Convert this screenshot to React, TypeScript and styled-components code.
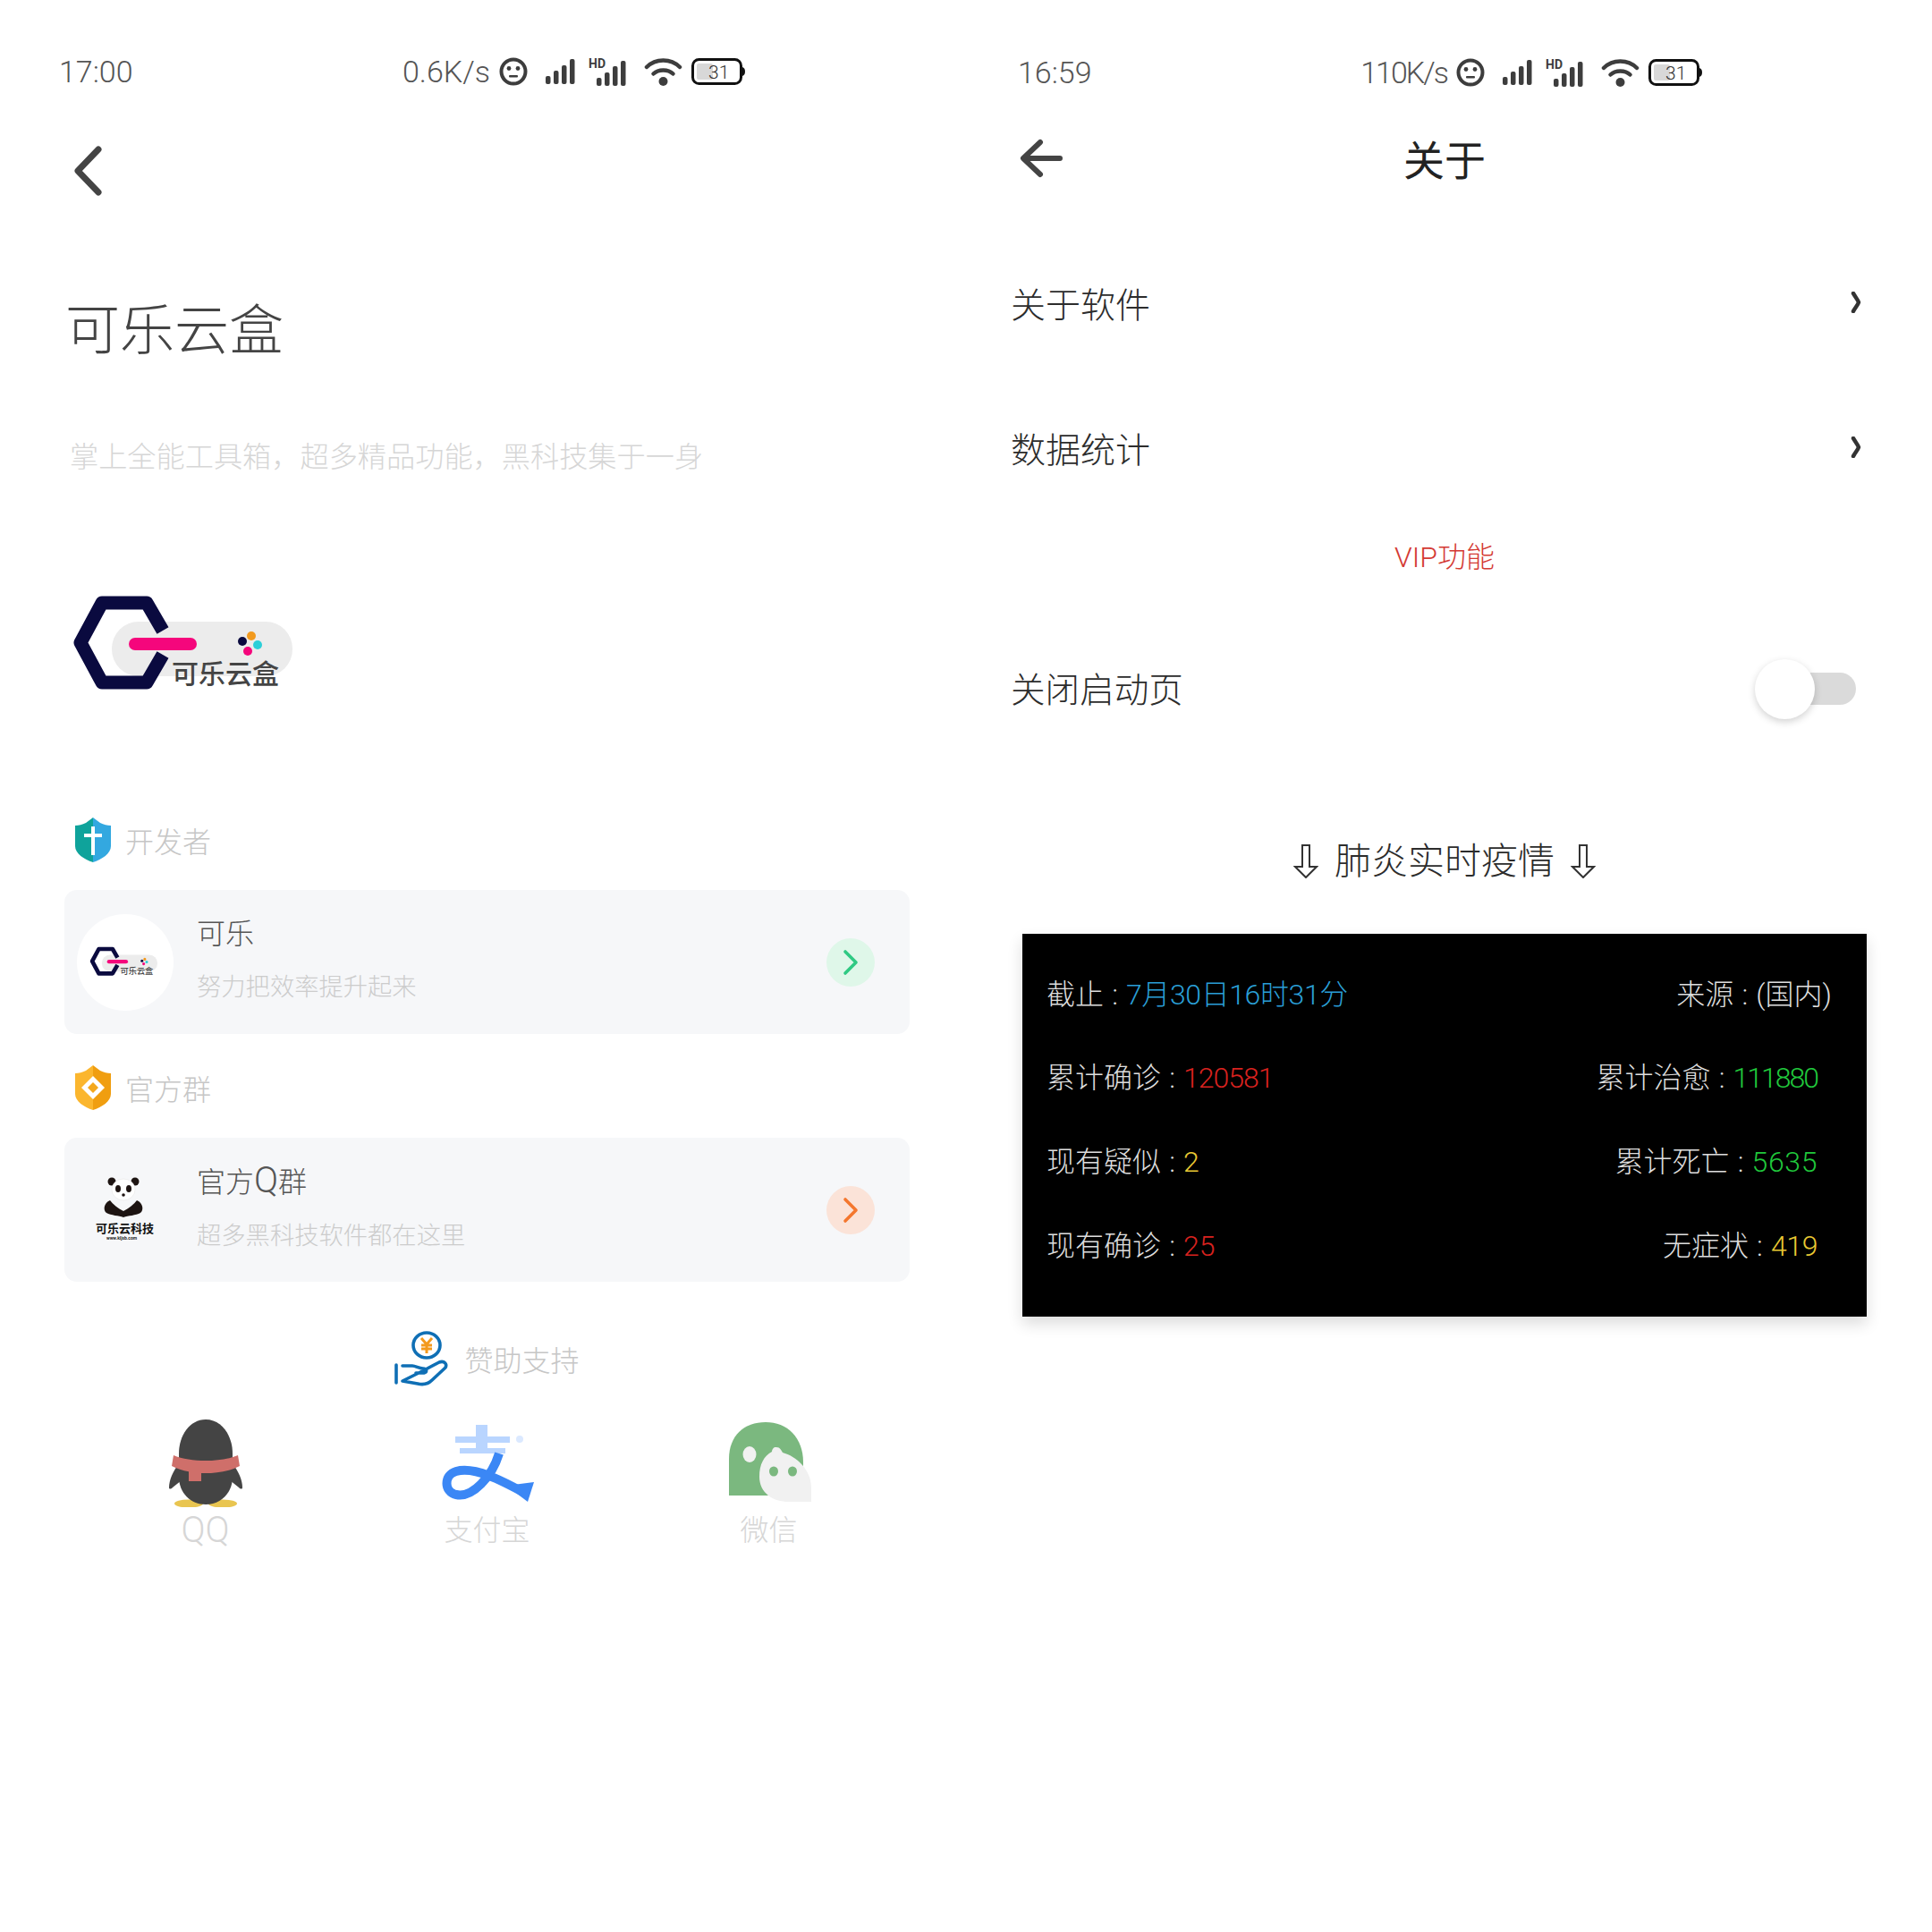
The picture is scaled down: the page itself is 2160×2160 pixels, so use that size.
import styled, { createGlobalStyle } from 'styled-components';

const GlobalStyle = createGlobalStyle`
  html, body {
    margin: 0;
    padding: 0;
    background: #fff;
  }
  body {
    font-family: Roboto, "Noto Sans CJK SC", sans-serif;
    font-weight: 300;
  }
`;

const Page = styled.div`
  display: grid;
  grid-template-columns: 1080px 1080px;
  width: 2160px;
  height: 2160px;
  background: #fff;
  overflow: hidden;
`;

const Panel = styled.section`
  display: flex;
  flex-direction: column;
  min-width: 0;
`;

/* status bar */

const StatusBar = styled.div<{ $top: number; $left: number; $right: number }>`
  display: flex;
  align-items: center;
  justify-content: space-between;
  height: 40px;
  padding: ${({ $top }) => $top}px ${({ $right }) => $right}px 0 ${({ $left }) => $left}px;
`;

const StatusText = styled.span<{ $tracking?: number }>`
  font-size: 34px;
  line-height: 40px;
  letter-spacing: ${({ $tracking }) => $tracking ?? 0}px;
  color: #555;
`;

const StatusRight = styled.div`
  display: flex;
  align-items: center;
`;

const StatusIcon = styled.svg<{ $gap: number }>`
  display: block;
  margin-left: ${({ $gap }) => $gap}px;
`;

const StatusIcons = () => (
  <>
    <StatusIcon $gap={10} width="32" height="32" viewBox="0 0 32 32">
      <circle cx="16" cy="16" r="13.5" fill="none" stroke="#3d3d3d" strokeWidth="4" />
      <circle cx="11" cy="12.5" r="2.4" fill="#3d3d3d" />
      <circle cx="21" cy="12.5" r="2.4" fill="#3d3d3d" />
      <rect x="11" y="20" width="10" height="2.6" rx="1" fill="#3d3d3d" />
    </StatusIcon>
    <StatusIcon $gap={20} width="33" height="28" viewBox="0 0 33 28">
      <rect x="0" y="19" width="5.5" height="9" rx="2" fill="#3d3d3d" />
      <rect x="9" y="13" width="5.5" height="15" rx="2" fill="#3d3d3d" />
      <rect x="18" y="7" width="5.5" height="21" rx="2" fill="#3d3d3d" />
      <rect x="27" y="0" width="5.5" height="28" rx="2" fill="#3d3d3d" />
    </StatusIcon>
    <StatusIcon $gap={15} width="42" height="36" viewBox="0 0 42 36">
      <text x="0" y="14" fontFamily="Roboto, sans-serif" fontWeight="700" fontSize="14" fill="#3d3d3d">
        HD
      </text>
      <rect x="9" y="25" width="5.5" height="9" rx="2" fill="#3d3d3d" />
      <rect x="18" y="19" width="5.5" height="15" rx="2" fill="#3d3d3d" />
      <rect x="27" y="12" width="5.5" height="22" rx="2" fill="#3d3d3d" />
      <rect x="36" y="6" width="5.5" height="28" rx="2" fill="#3d3d3d" />
    </StatusIcon>
    <StatusIcon $gap={20} width="43" height="32" viewBox="0 0 43 32">
      <path d="M3 11 C13 1 30 1 40 11" fill="none" stroke="#3d3d3d" strokeWidth="4.5" strokeLinecap="round" />
      <path d="M10.5 18.5 C16 13 27 13 32.5 18.5" fill="none" stroke="#3d3d3d" strokeWidth="4.5" strokeLinecap="round" />
      <circle cx="21.5" cy="27" r="5" fill="#3d3d3d" />
    </StatusIcon>
    <StatusIcon $gap={10} width="61" height="30" viewBox="0 0 61 30">
      <rect x="1.5" y="1.5" width="54" height="27" rx="7" fill="#fff" stroke="#111" strokeWidth="3" />
      <rect x="6" y="6" width="18" height="18" rx="2" fill="#d8d8d8" />
      <path d="M57 10 C61 11 61 19 57 20 Z" fill="#111" />
      <text x="19" y="23" fontFamily="Roboto, sans-serif" fontWeight="300" fontSize="21" fill="#333">
        31
      </text>
    </StatusIcon>
  </>
);

/* left panel */

const BackChevron = styled.svg`
  display: block;
  margin: 63px 0 0 80px;
`;

const AppTitle = styled.h1`
  margin: 111px 0 0 73px;
  font-size: 61px;
  line-height: 80px;
  font-weight: 300;
  color: #444;
`;

const AppSlogan = styled.p`
  margin: 81px 0 0 78px;
  font-size: 32.2px;
  line-height: 40px;
  color: #d6d6d6;
`;

const LogoWrap = styled.div`
  margin: 130px 0 0 80px;
  height: 120px;
`;

const SectionLabel = styled.div<{ $top: number }>`
  display: flex;
  align-items: center;
  gap: 16px;
  height: 50px;
  margin: ${({ $top }) => $top}px 0 0 84px;
  font-size: 32px;
  color: #c6c6c6;
`;

const Card = styled.div`
  display: flex;
  align-items: center;
  width: 945px;
  height: 161px;
  margin: 31px 0 0 72px;
  padding: 0 39px 0 14px;
  box-sizing: border-box;
  background: #f6f7f9;
  border-radius: 14px;
`;

const Avatar = styled.div<{ $bg: string }>`
  display: flex;
  align-items: center;
  justify-content: center;
  flex: none;
  width: 108px;
  height: 108px;
  border-radius: 50%;
  background: ${({ $bg }) => $bg};
`;

const CardText = styled.div`
  display: flex;
  flex-direction: column;
  gap: 18px;
  flex: 1;
  margin: 0 0 5px 26px;
`;

const CardTitle = styled.div`
  font-size: 32px;
  line-height: 44px;
  color: #555;
`;

const WideLetter = styled.span`
  font-size: 40px;
`;

const CardDesc = styled.div`
  font-size: 27.3px;
  line-height: 40px;
  color: #ccc;
`;

const CardArrow = styled.div<{ $bg: string }>`
  display: flex;
  align-items: center;
  justify-content: center;
  flex: none;
  width: 54px;
  height: 54px;
  border-radius: 50%;
  background: ${({ $bg }) => $bg};
`;

const SponsorRow = styled.div`
  display: flex;
  align-items: center;
  justify-content: center;
  gap: 18px;
  width: 945px;
  height: 62px;
  margin: 55px 0 0 72px;
  font-size: 32px;
  color: #c6c6c6;
`;

const PayGrid = styled.div`
  display: grid;
  grid-template-columns: repeat(3, 315px);
  margin: 35px 0 0 72px;
`;

const PayItem = styled.div`
  display: flex;
  flex-direction: column;
  align-items: center;
`;

const PayIcon = styled.svg`
  display: block;
`;

const PayLabel = styled.div<{ $size?: number }>`
  margin-top: 6px;
  font-size: ${({ $size }) => $size ?? 32}px;
  line-height: 40px;
  color: #d6d6d6;
`;

const LogoMark = ({ width }: { width: number }) => (
  <svg width={width} height={(width * 120) / 260} viewBox="0 0 260 120" style={{ display: 'block' }}>
    <rect x="45" y="34" width="202" height="61" rx="30" fill="#ececec" />
    <path
      d="M102 44 L84 13 H34 L10 57.5 L34 102 H84 L102 71"
      fill="none"
      stroke="#0a0a3f"
      strokeWidth="15"
      strokeLinejoin="round"
    />
    <rect x="64" y="52" width="76" height="14" rx="7" fill="#f5067c" />
    <circle cx="191" cy="56" r="5" fill="#0a0a3f" />
    <circle cx="201" cy="50" r="5" fill="#f29a1f" />
    <circle cx="208" cy="60" r="5" fill="#2ccfd8" />
    <circle cx="197" cy="67" r="5" fill="#f5067c" />
    <text x="112" y="103" fontFamily="'Noto Sans CJK SC', sans-serif" fontWeight="500" fontSize="30" fill="#444">
      可乐云盒
    </text>
  </svg>
);

const Panda = () => (
  <svg width="108" height="108" viewBox="0 0 108 108">
    <circle cx="39" cy="22" r="4.5" fill="#1d1412" />
    <circle cx="65" cy="22" r="4.5" fill="#1d1412" />
    <ellipse cx="52" cy="31" rx="13" ry="12" fill="#fff" stroke="#e6e6e6" strokeWidth="0.6" />
    <ellipse cx="46" cy="30" rx="3" ry="4" fill="#1d1412" />
    <ellipse cx="58" cy="30" rx="3" ry="4" fill="#1d1412" />
    <circle cx="52" cy="37" r="1.8" fill="#1d1412" />
    <path
      d="M37 43 C30 46 29 54 33 57 C38 60 47 60 52 62 C57 60 66 60 71 57 C75 54 74 46 67 43 C64 47 58 52 52 55 C46 52 40 47 37 43 Z"
      fill="#1d1412"
    />
    <text x="21" y="79" fontFamily="'Noto Sans CJK SC', serif" fontWeight="700" fontSize="13" fill="#111">
      可乐云科技
    </text>
    <text x="33" y="87" fontFamily="Roboto, sans-serif" fontWeight="700" fontSize="5" fill="#222">
      www.kljsb.com
    </text>
  </svg>
);

/* right panel */

const TitleBar = styled.header`
  display: grid;
  grid-template-columns: 48px 1fr 48px;
  align-items: center;
  height: 70px;
  margin-top: 41px;
  padding: 0 70px 0 60px;
`;

const TitleText = styled.h2`
  margin: 5px 0 0;
  text-align: center;
  font-size: 46px;
  line-height: 64px;
  font-weight: 400;
  color: #222;
`;

const MenuList = styled.div`
  margin-top: 45px;
`;

const MenuRow = styled.div`
  display: flex;
  align-items: center;
  justify-content: space-between;
  height: 162px;
  padding: 0 79px 0 50px;
  font-size: 39px;
  color: #2c2c2c;
`;

const VipLabel = styled.div`
  margin: 22px 0 0 -10px;
  text-align: center;
  font-size: 32px;
  line-height: 40px;
  color: #d43a34;
`;

const SwitchRow = styled.div`
  display: flex;
  align-items: center;
  justify-content: space-between;
  height: 70px;
  margin-top: 92px;
  padding: 0 85px 0 50px;
  font-size: 38.6px;
  color: #2c2c2c;
`;

const SwitchLabel = styled.span`
  margin-bottom: 4px;
`;

const SwitchTrack = styled.div`
  display: flex;
  align-items: center;
  width: 100px;
  height: 36px;
  border-radius: 0 18px 18px 0;
  background: #dadada;
`;

const SwitchKnob = styled.div`
  flex: none;
  width: 67px;
  height: 67px;
  margin-left: -13px;
  border-radius: 50%;
  background: #fff;
  box-shadow: 0 3px 8px rgba(0, 0, 0, 0.18);
`;

const EpidemicHeading = styled.div`
  display: flex;
  align-items: center;
  justify-content: center;
  gap: 18px;
  margin: 128px 0 0 -10px;
  font-size: 41px;
  line-height: 60px;
  color: #2c2c2c;
`;

const StatsPanel = styled.div`
  display: flex;
  flex-direction: column;
  width: 944px;
  height: 428px;
  margin: 51px 0 0 63px;
  padding: 18px 39px 0 27px;
  box-sizing: border-box;
  background: #000;
  box-shadow: 0 8px 16px rgba(0, 0, 0, 0.14);
`;

const StatsRow = styled.div`
  display: flex;
  align-items: center;
  justify-content: space-between;
  height: 93.6px;
`;

const Stat = styled.div<{ $inset?: number }>`
  margin-right: ${({ $inset }) => $inset ?? 0}px;
  font-size: 32px;
  color: #ddd;
`;

const StatColon = styled.span`
  display: inline-block;
  width: 25px;
  text-align: center;
`;

const StatValue = styled.span<{ $color: string; $tracking: number }>`
  color: ${({ $color }) => $color};
  letter-spacing: ${({ $tracking }) => $tracking}px;
`;

type StatCell = {
  label: string;
  value: string;
  color: string;
  tracking?: number;
  inset?: number;
};

const statRows: StatCell[][] = [
  [
    { label: '截止', value: '7月30日16时31分', color: '#2a9fd6', tracking: -0.4 },
    { label: '来源', value: '(国内)', color: '#ddd' },
  ],
  [
    { label: '累计确诊', value: '120581', color: '#d8221f', tracking: -1 },
    { label: '累计治愈', value: '111880', color: '#20c83c', tracking: -2, inset: 16 },
  ],
  [
    { label: '现有疑似', value: '2', color: '#e8c833' },
    { label: '累计死亡', value: '5635', color: '#20c83c', tracking: 0.6, inset: 16 },
  ],
  [
    { label: '现有确诊', value: '25', color: '#d8221f' },
    { label: '无症状', value: '419', color: '#e8c833', tracking: -0.4, inset: 16 },
  ],
];

const RowChevron = () => (
  <svg width="12" height="24" viewBox="0 0 12 24">
    <path d="M3 2 C6 7 8 9 9 12 C8 15 6 17 3 22" fill="none" stroke="#333" strokeWidth="4.4" strokeLinecap="round" strokeLinejoin="round" />
  </svg>
);

const CardChevron = ({ color }: { color: string }) => (
  <svg width="18" height="30" viewBox="0 0 18 30">
    <path d="M3 3 L15 15 L3 27" fill="none" stroke={color} strokeWidth="3.6" strokeLinecap="round" strokeLinejoin="round" />
  </svg>
);

const DownArrow = () => (
  <svg width="28" height="38" viewBox="0 0 28 38">
    <path d="M10 1 H18 V25 H26 L14 37 L2 25 H10 Z" fill="none" stroke="#333" strokeWidth="2" strokeLinejoin="miter" />
  </svg>
);

export default function App() {
  return (
    <Page>
      <GlobalStyle />
      <Panel>
        <StatusBar $top={60} $left={66} $right={246}>
          <StatusText>17:00</StatusText>
          <StatusRight>
            <StatusText>0.6K/s</StatusText>
            <StatusIcons />
          </StatusRight>
        </StatusBar>

        <BackChevron width="36" height="56" viewBox="0 0 36 56">
          <path d="M30 4 L7 28 L30 52" fill="none" stroke="#444" strokeWidth="7" strokeLinecap="round" strokeLinejoin="round" />
        </BackChevron>

        <AppTitle>可乐云盒</AppTitle>
        <AppSlogan>掌上全能工具箱，超多精品功能，黑科技集于一身</AppSlogan>

        <LogoWrap>
          <LogoMark width={260} />
        </LogoWrap>

        <SectionLabel $top={133}>
          <svg width="40" height="50" viewBox="0 0 40 50">
            <path d="M20 0 L28 6 C32 8 36 9 40 9 V32 C40 40 30 47 20 50 Z" fill="#33a8e0" />
            <path d="M20 0 L12 6 C8 8 4 9 0 9 V32 C0 40 10 47 20 50 Z" fill="#0fa39b" />
            <path d="M18 10 H22 V18 H30 V22 H22 V42 H18 V22 H10 V18 H18 Z" fill="#fff" />
          </svg>
          开发者
        </SectionLabel>

        <Card>
          <Avatar $bg="#fff">
            <LogoMark width={80} />
          </Avatar>
          <CardText>
            <CardTitle>可乐</CardTitle>
            <CardDesc>努力把效率提升起来</CardDesc>
          </CardText>
          <CardArrow $bg="#dff7e9">
            <CardChevron color="#2fc983" />
          </CardArrow>
        </Card>

        <SectionLabel $top={35}>
          <svg width="40" height="50" viewBox="0 0 40 50">
            <path d="M20 0 L28 6 C32 8 36 9 40 9 V32 C40 40 30 47 20 50 Z" fill="#f09e10" />
            <path d="M20 0 L12 6 C8 8 4 9 0 9 V32 C0 40 10 47 20 50 Z" fill="#fbb62e" />
            <path d="M20 12 L33 25 L20 38 L7 25 Z" fill="#fff" />
            <path d="M20 19 L26 25 L20 31 L14 25 Z" fill="#f4a81c" />
          </svg>
          官方群
        </SectionLabel>

        <Card>
          <Avatar $bg="transparent">
            <Panda />
          </Avatar>
          <CardText>
            <CardTitle>
              官方<WideLetter>Q</WideLetter>群
            </CardTitle>
            <CardDesc>超多黑科技软件都在这里</CardDesc>
          </CardText>
          <CardArrow $bg="#fbe3d8">
            <CardChevron color="#f4772e" />
          </CardArrow>
        </Card>

        <SponsorRow>
          <svg width="60" height="62" viewBox="0 0 60 62">
            <ellipse cx="36" cy="16" rx="15" ry="14" fill="#fff" stroke="#0f6fb5" strokeWidth="3.6" />
            <path d="M30 8 L36 15 L42 8 M36 15 V25 M30 16 H42 M30 20 H42" fill="none" stroke="#f39a1e" strokeWidth="3" />
            <path d="M2 38 V58" stroke="#0f6fb5" strokeWidth="3.6" strokeLinecap="round" />
            <path
              d="M9 39 H20 C24 39 27 42 32 42 C36 42 37 46 33 47 H24 M33 44 L50 35 C56 33 59 37 57 41 L42 55 C37 60 30 60 26 59 L9 56 Z"
              fill="none"
              stroke="#0f6fb5"
              strokeWidth="3.6"
              strokeLinejoin="round"
              strokeLinecap="round"
            />
          </svg>
          赞助支持
        </SponsorRow>

        <PayGrid>
          <PayItem>
            <PayIcon width="90" height="100" viewBox="0 0 90 100">
              <ellipse cx="26" cy="96" rx="16" ry="4.5" fill="#e9c550" />
              <ellipse cx="64" cy="96" rx="16" ry="4.5" fill="#e9c550" />
              <path d="M16 50 C8 60 4 70 4 78 C4 80 6 80 8 78 L18 70 Z" fill="#444" />
              <path d="M74 50 C82 60 86 70 86 78 C86 80 84 80 82 78 L72 70 Z" fill="#444" />
              <path d="M45 2 C63 2 75 20 75 40 C75 50 75 56 75 66 C75 84 62 97 45 97 C28 97 15 84 15 66 C15 56 15 50 15 40 C15 20 27 2 45 2 Z" fill="#444" />
              <path d="M9 42 C28 50 62 50 81 42 L83 54 C72 60 56 62 45 62 C34 62 18 60 7 54 Z" fill="#cf6f6a" />
              <rect x="26" y="58" width="14" height="13" fill="#cf6f6a" />
            </PayIcon>
            <PayLabel $size={40}>QQ</PayLabel>
          </PayItem>
          <PayItem>
            <PayIcon width="110" height="100" viewBox="0 0 110 100">
              <rect x="42" y="8" width="13" height="30" fill="#b9d5ff" />
              <rect x="19" y="21" width="61" height="7" fill="#b9d5ff" />
              <rect x="24" y="34" width="51" height="6" fill="#b9d5ff" />
              <ellipse cx="91" cy="24" rx="4" ry="4" fill="#dbe9ff" />
              <path
                d="M68 40 C60 66 38 90 20 86 C6 83 6 64 20 60 C42 54 74 72 100 86"
                fill="none"
                stroke="#3b87f5"
                strokeWidth="10"
              />
              <path d="M107 72 L100 94 L76 76 Z" fill="#3b87f5" />
            </PayIcon>
            <PayLabel>支付宝</PayLabel>
          </PayItem>
          <PayItem>
            <PayIcon width="100" height="100" viewBox="0 0 100 100">
              <path d="M5 87 V46 C5 20 22 5 46 5 C70 5 88 22 88 50 V87 Z" fill="#7bb87f" />
              <ellipse cx="28" cy="41" rx="7.5" ry="9" fill="#f1f1f1" />
              <path d="M56 33 C62 33 62 34 65 39 C80 43 97 58 97 78 V94 H72 C54 94 39 84 39 66 C39 52 44 43 53 38 C53 36 54 34 56 33 Z" fill="#f1f1f1" />
              <ellipse cx="55" cy="60" rx="5" ry="5.5" fill="#7bb87f" />
              <ellipse cx="76" cy="60" rx="5" ry="5.5" fill="#7bb87f" />
            </PayIcon>
            <PayLabel>微信</PayLabel>
          </PayItem>
        </PayGrid>
      </Panel>

      <Panel>
        <StatusBar $top={61} $left={58} $right={256}>
          <StatusText>16:59</StatusText>
          <StatusRight>
            <StatusText $tracking={-2}>110K/s</StatusText>
            <StatusIcons />
          </StatusRight>
        </StatusBar>

        <TitleBar>
          <svg width="48" height="44" viewBox="0 0 48 44">
            <path d="M23 4 L4 22 L23 40 M5 22 H45" fill="none" stroke="#444" strokeWidth="6" strokeLinecap="round" strokeLinejoin="round" />
          </svg>
          <TitleText>关于</TitleText>
        </TitleBar>

        <MenuList>
          <MenuRow>
            关于软件
            <RowChevron />
          </MenuRow>
          <MenuRow>
            数据统计
            <RowChevron />
          </MenuRow>
        </MenuList>

        <VipLabel>VIP功能</VipLabel>

        <SwitchRow>
          <SwitchLabel>关闭启动页</SwitchLabel>
          <SwitchTrack>
            <SwitchKnob />
          </SwitchTrack>
        </SwitchRow>

        <EpidemicHeading>
          <DownArrow />
          肺炎实时疫情
          <DownArrow />
        </EpidemicHeading>

        <StatsPanel>
          {statRows.map((cells) => (
            <StatsRow key={cells[0].label}>
              {cells.map((cell) => (
                <Stat key={cell.label} $inset={cell.inset}>
                  {cell.label}
                  <StatColon>:</StatColon>
                  <StatValue $color={cell.color} $tracking={cell.tracking ?? 0}>
                    {cell.value}
                  </StatValue>
                </Stat>
              ))}
            </StatsRow>
          ))}
        </StatsPanel>
      </Panel>
    </Page>
  );
}
